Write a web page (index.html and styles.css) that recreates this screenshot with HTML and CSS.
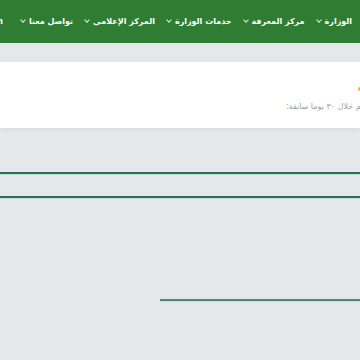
FILE: index.html
```html
<!DOCTYPE html>
<html lang="ar" dir="rtl">
<head>
    <meta charset="UTF-8">
    <meta name="viewport" content="width=device-width, initial-scale=1.0">
    <title>الوزارة</title>
    <link rel="stylesheet" href="styles.css">
</head>
<body>

    <nav class="topnav">
        <a class="nav-item" href="#">الوزارة <span class="chev"></span></a>
        <a class="nav-item" href="#">مركز المعرفة <span class="chev"></span></a>
        <a class="nav-item" href="#">خدمات الوزارة <span class="chev"></span></a>
        <a class="nav-item" href="#">المركز الإعلامي <span class="chev"></span></a>
        <a class="nav-item" href="#">تواصل معنا <span class="chev"></span></a>
        <a class="nav-item lang" href="#">En</a>
    </nav>

    <div class="stats-card">
        <span class="dot"></span>
        <p class="stats-note">عدد الزوار من العالم خلال ٣٠ يوما سابقة:</p>
    </div>

    <div class="divider first"></div>
    <div class="divider second"></div>
    <div class="divider short"></div>

</body>
</html>
```

FILE: styles.css
```css
* {
    margin: 0;
    padding: 0;
    box-sizing: border-box;
}
html, body {
    height: 100%;
}
body {
    background-color: #e4e8eb;
    font-family: "DejaVu Sans", sans-serif;
    overflow: hidden;
}
.topnav {
    height: 43px;
    background-color: #2e7d32;
    display: flex;
    align-items: center;
    gap: 12px;
    padding-right: 8px;
    white-space: nowrap;
}
.nav-item {
    color: #ffffff;
    text-decoration: none;
    font-size: 8px;
    font-weight: bold;
    display: flex;
    align-items: center;
    gap: 4px;
}
.lang {
    margin-right: 6px;
}
.chev {
    width: 4px;
    height: 4px;
    border-right: 1px solid #dfeee0;
    border-bottom: 1px solid #dfeee0;
    transform: rotate(45deg);
    margin-top: -3px;
}
.stats-card {
    margin-top: 19px;
    height: 66px;
    background: #ffffff;
    box-shadow: 0 2px 4px rgba(0, 0, 0, 0.05);
    overflow: hidden;
    position: relative;
    padding-top: 40px;
}
.dot {
    position: absolute;
    top: 25px;
    right: -2px;
    width: 4px;
    height: 4px;
    border-radius: 50%;
    background: #f2b233;
}
.stats-note {
    color: #9a9fa4;
    font-size: 8px;
    white-space: nowrap;
    margin-right: -64px;
}
.divider {
    height: 2px;
    background: #2b6d55;
    box-shadow: 0 1px 0 #bfe3d6;
}
.divider.first {
    margin-top: 44px;
}
.divider.second {
    margin-top: 22px;
}
.divider.short {
    margin-top: 101px;
    margin-left: 160px;
    background: #4f8a77;
}
```
